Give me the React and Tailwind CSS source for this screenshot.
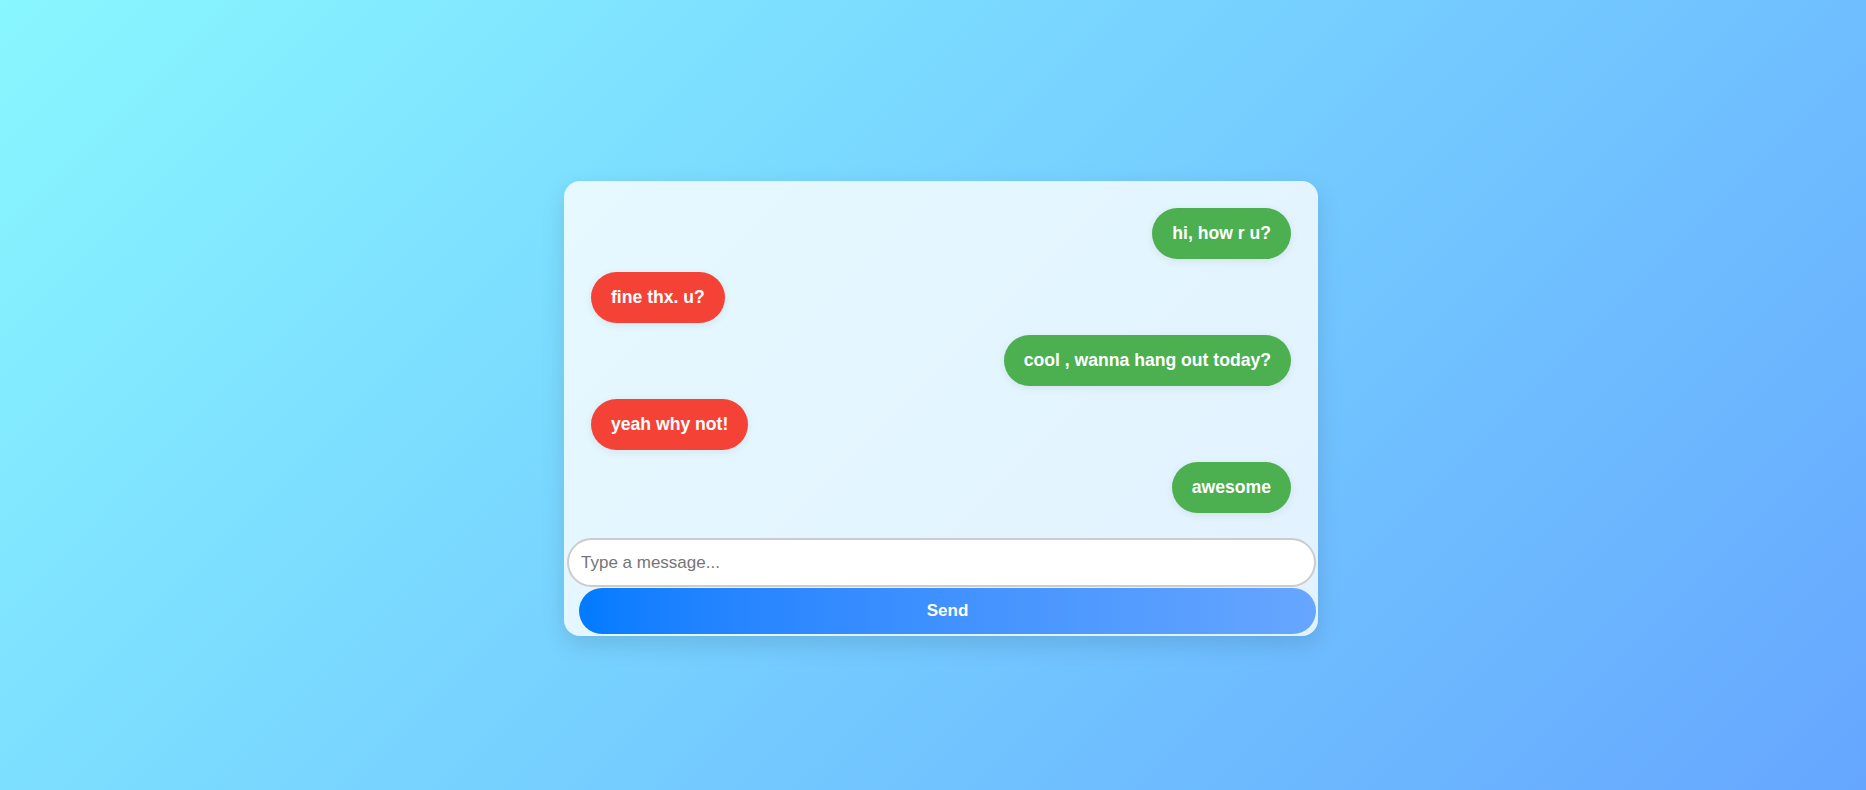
const messages = [
  { text: 'hi, how r u?', mine: true },
  { text: 'fine thx. u?', mine: false },
  { text: 'cool , wanna hang out today?', mine: true },
  { text: 'yeah why not!', mine: false },
  { text: 'awesome', mine: true },
]

export default function App() {
  return (
    <div
      className="h-screen w-full flex justify-center items-start pt-[181px] bg-linear-135 from-[#89f7fe] to-[#66a6ff]"
      style={{ fontFamily: '"Liberation Sans", Arial, sans-serif' }}
    >
      {/* Chat card */}
      <div className="ml-[16px] w-[754px] h-[455px] flex flex-col rounded-[16px] bg-white/80 shadow-[0_8px_24px_rgba(0,0,0,0.12)] pb-[2px]">
        {/* Messages */}
        <div className="flex-1 flex flex-col gap-[12.5px] px-[27px] pt-[27px]">
          {messages.map((m, i) => (
            <div key={i} className={m.mine ? 'flex justify-end' : 'flex justify-start'}>
              <div
                className={
                  'px-[20px] py-[15px] leading-[21px] text-[17.6px] font-bold text-white rounded-full shadow-[0_2px_8px_rgba(0,0,0,0.08)] ' +
                  (m.mine ? 'bg-[#4caf50]' : 'bg-[#f44336]')
                }
              >
                {m.text}
              </div>
            </div>
          ))}
        </div>

        {/* Input */}
        <input
          type="text"
          placeholder="Type a message..."
          className="ml-[3px] mr-[2px] h-[49px] px-[12px] border-2 border-[#cccccc] rounded-full bg-white text-[17px] text-gray-800 placeholder:text-[#757575] outline-none"
        />
        <button className="ml-[15px] mr-[2px] mt-[1px] h-[46px] rounded-full bg-linear-to-r from-[#007bff] to-[#66a6ff] text-white font-bold text-[17px]">
          Send
        </button>
      </div>
    </div>
  )
}
